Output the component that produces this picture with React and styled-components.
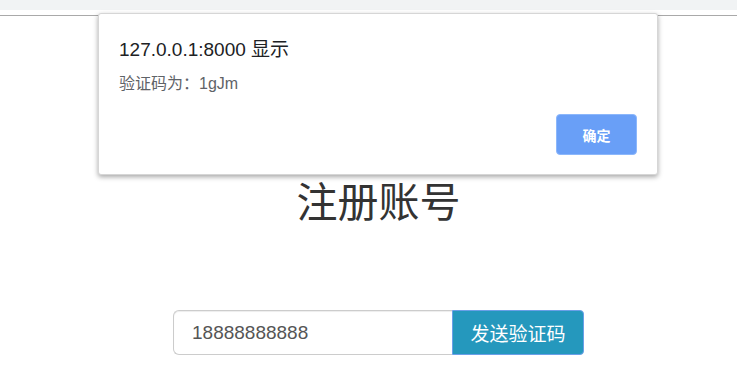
import React from "react";
import styled, { createGlobalStyle } from "styled-components";

const Global = createGlobalStyle`
  html, body { margin: 0; padding: 0; background: #fff; }
  body { font-family: "Liberation Sans", "Noto Sans CJK SC", sans-serif; }
  * { box-sizing: border-box; }
`;

const Page = styled.div`
  position: relative;
  width: 737px;
  height: 367px;
  overflow: hidden;
  background: #fff;
`;

const TopBar = styled.div`
  height: 10px;
  background: #f1f3f4;
`;

const Divider = styled.div`
  margin-top: 5px;
  height: 1px;
  background: #a9a9a9;
`;

const Content = styled.main`
  display: flex;
  flex-direction: column;
  align-items: center;
  padding-left: 20px;
`;

const Heading = styled.h1`
  margin: 160px 0 0;
  font-family: "Noto Sans CJK SC", sans-serif;
  font-weight: 400;
  font-size: 41px;
  line-height: 46px;
  color: #333;
`;

const InputGroup = styled.div`
  display: flex;
  margin-top: 88px;
  width: 411px;
  height: 45px;
`;

const PhoneInput = styled.input`
  flex: 1;
  min-width: 0;
  height: 100%;
  padding: 0 18px;
  border: 1px solid #ccc;
  border-right: none;
  border-radius: 6px 0 0 6px;
  font-family: "Liberation Sans", "Noto Sans CJK SC", sans-serif;
  font-size: 19px;
  color: #555;
  outline: none;
  box-shadow: inset 0 1px 1px rgba(0, 0, 0, 0.075);
`;

const SendButton = styled.button`
  width: 132px;
  height: 100%;
  border: 1px solid #6a9fe8;
  border-radius: 0 4px 4px 0;
  background: #2598bd;
  color: #fff;
  font-family: "Noto Sans CJK SC", sans-serif;
  font-size: 19px;
  padding: 0;
  cursor: pointer;
`;

const Dialog = styled.div`
  position: absolute;
  left: 98px;
  top: 13px;
  width: 560px;
  height: 162px;
  background: #fff;
  border: 1px solid #d6d6d6;
  border-radius: 3px;
  box-shadow: 0 2px 5px rgba(0, 0, 0, 0.35);
  display: flex;
  flex-direction: column;
  padding: 24px 20px 19px 20px;
`;

const DialogTitle = styled.div`
  font-family: "Liberation Sans", "Noto Sans CJK SC", sans-serif;
  font-size: 19px;
  line-height: 24px;
  color: #202124;
`;

const DialogMessage = styled.div`
  margin-top: 12px;
  font-family: "Liberation Sans", "Noto Sans CJK SC", sans-serif;
  font-size: 16px;
  line-height: 20px;
  color: #5f6368;
`;

const DialogActions = styled.div`
  margin-top: auto;
  display: flex;
  justify-content: flex-end;
`;

const OkButton = styled.button`
  width: 81px;
  height: 41px;
  border: 1px solid #8cb7fb;
  border-radius: 4px;
  background: #699ff7;
  color: #fff;
  font-family: "Noto Sans CJK SC", sans-serif;
  font-weight: 700;
  font-size: 14px;
  padding: 0;
`;

export default function App() {
  return (
    <Page>
      <Global />
      <TopBar />
      <Divider />
      <Content>
        <Heading>注册账号</Heading>
        <InputGroup>
          <PhoneInput defaultValue="18888888888" />
          <SendButton>发送验证码</SendButton>
        </InputGroup>
      </Content>
      <Dialog>
        <DialogTitle>127.0.0.1:8000 显示</DialogTitle>
        <DialogMessage>验证码为：1gJm</DialogMessage>
        <DialogActions>
          <OkButton>确定</OkButton>
        </DialogActions>
      </Dialog>
    </Page>
  );
}
